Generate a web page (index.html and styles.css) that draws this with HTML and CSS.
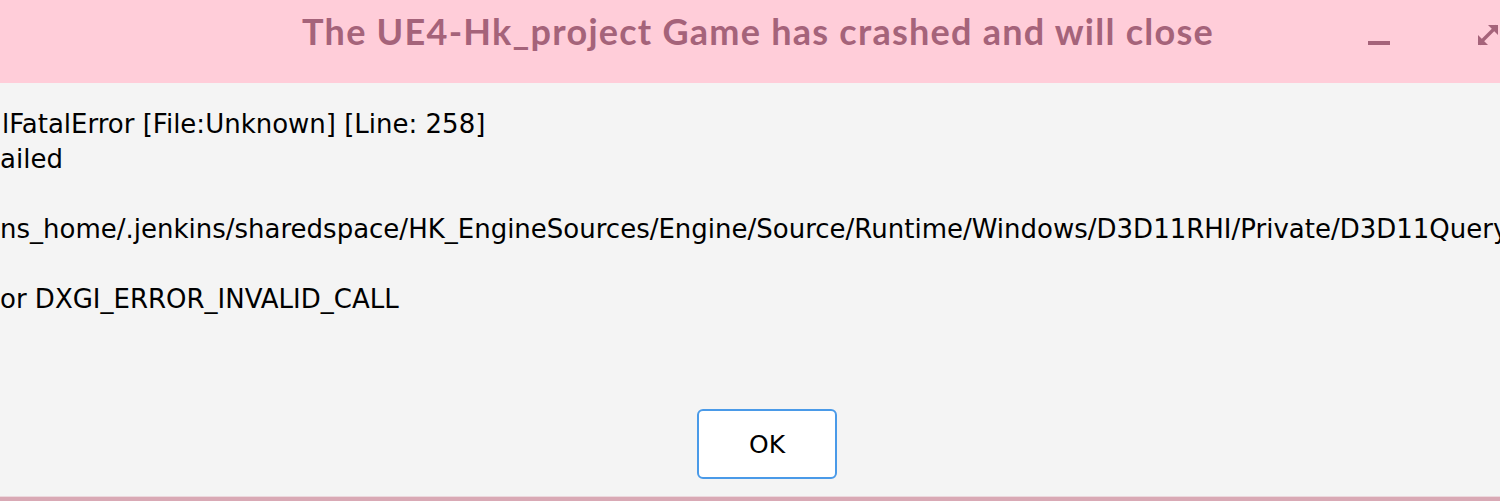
FILE: index.html
```html
<!DOCTYPE html>
<html>
<head>
<meta charset="utf-8">
<link rel="stylesheet" href="styles.css">
</head>
<body>
<div class="window">
  <header class="titlebar">
    <h1 class="title">The UE4-Hk_project Game has crashed and will close</h1>
    <div class="controls">
      <span class="minimize"></span>
      <svg class="expand" width="26" height="26" viewBox="0 0 26 26">
        <path d="M4 22 L22 4" stroke="#a5637a" stroke-width="3.4" fill="none"/>
        <path d="M13 3 L23 3 L23 13 Z" fill="#a5637a"/>
        <path d="M3 13 L3 23 L13 23 Z" fill="#a5637a"/>
      </svg>
    </div>
  </header>
  <main class="content">
    <div class="message">
      <p class="line first">lFatalError [File:Unknown] [Line: 258]</p>
      <p class="line">ailed</p>
      <p class="line blank">&nbsp;</p>
      <p class="line">ns_home/.jenkins/sharedspace/HK_EngineSources/Engine/Source/Runtime/Windows/D3D11RHI/Private/D3D11Query</p>
      <p class="line blank">&nbsp;</p>
      <p class="line">or DXGI_ERROR_INVALID_CALL</p>
    </div>
    <div class="actions">
      <button class="ok">OK</button>
    </div>
  </main>
  <div class="bottom-edge"></div>
</div>
</body>
</html>
```
FILE: styles.css
```css
html, body {
  margin: 0;
  padding: 0;
  width: 1500px;
  height: 501px;
  overflow: hidden;
  background: #f4f4f4;
}
.window {
  display: flex;
  flex-direction: column;
  height: 501px;
}
.titlebar {
  height: 83px;
  background: #ffcdd9;
  display: flex;
  align-items: center;
  position: relative;
}
.title {
  margin: 0;
  width: 100%;
  padding-left: 16px;
  text-align: center;
  font-family: "Lato", "Open Sans", sans-serif;
  font-weight: 700;
  font-size: 36px;
  color: #a5637a;
  letter-spacing: 1.25px;
  line-height: 1;
  padding-bottom: 22px;
  box-sizing: border-box;
}
.controls {
  position: absolute;
  top: 0;
  left: 1368px;
  height: 83px;
  display: flex;
  align-items: center;
  gap: 85px;
}
.minimize {
  display: block;
  width: 22px;
  height: 4px;
  background: #a5637a;
  margin-top: 2px;
}
.expand {
  margin-top: -14px;
}
.content {
  flex: 1;
  display: flex;
  flex-direction: column;
  overflow: hidden;
}
.message {
  padding-top: 24px;
  font-family: "DejaVu Sans", Verdana, sans-serif;
  font-size: 26px;
  letter-spacing: 0;
  color: #000;
  white-space: nowrap;
}
.line {
  margin: 0;
  line-height: 35px;
  height: 35px;
}
.first {
  padding-left: 2px;
}
.actions {
  margin-top: auto;
  padding-bottom: 17px;
  display: flex;
  padding-left: 697px;
}
.ok {
  width: 140px;
  height: 70px;
  background: #fff;
  border: 2px solid #4a9ae8;
  border-radius: 6px;
  font-family: "DejaVu Sans", Verdana, sans-serif;
  font-size: 25px;
  color: #000;
  padding: 0;
}
.bottom-edge {
  height: 4px;
  background: #d9a9b5;
  border-top: 1px solid #ecd8dd;
}
```
